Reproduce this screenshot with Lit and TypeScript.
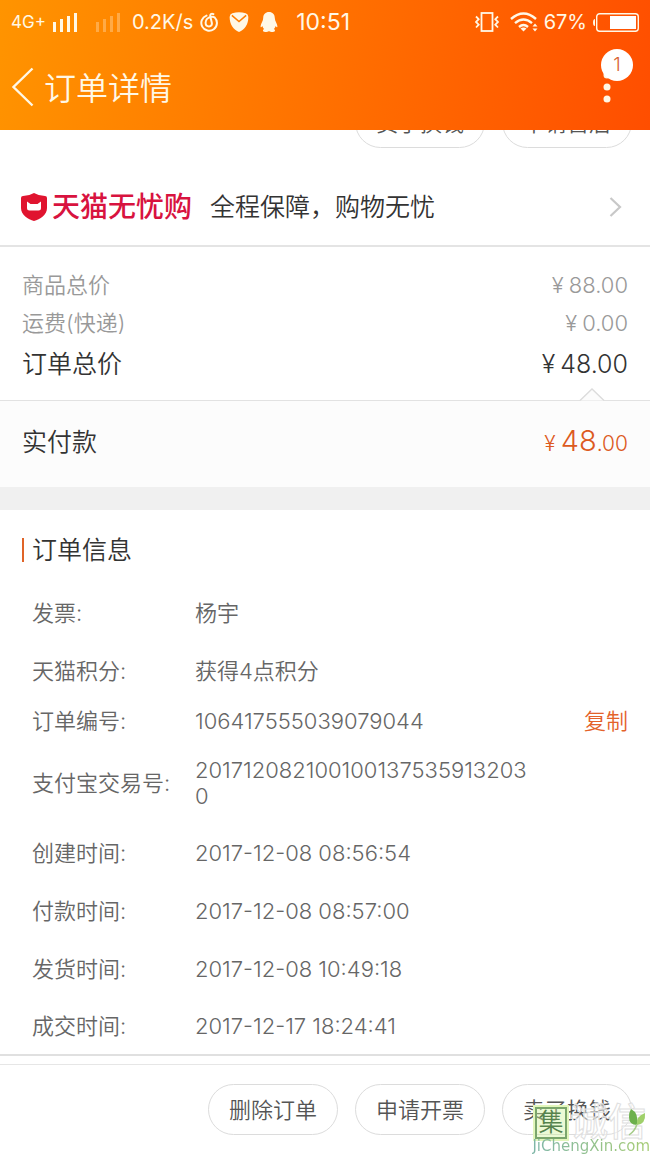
import { LitElement, html, css } from "lit";
import { customElement } from "lit/decorators.js";

interface InfoRow {
  label: string;
  value: string;
  size?: "compact" | "tall";
  copy?: boolean;
}

const INFO: InfoRow[] = [
  { label: "发票:", value: "杨宇" },
  { label: "天猫积分:", value: "获得4点积分" },
  { label: "订单编号:", value: "106417555039079044", size: "compact", copy: true },
  { label: "支付宝交易号:", value: "2017120821001001375359132030", size: "tall" },
  { label: "创建时间:", value: "2017-12-08 08:56:54" },
  { label: "付款时间:", value: "2017-12-08 08:57:00" },
  { label: "发货时间:", value: "2017-12-08 10:49:18" },
  { label: "成交时间:", value: "2017-12-17 18:24:41" },
];

const signal = html`<svg width="25" height="19" viewBox="0 0 25 19" fill="currentColor" aria-hidden="true">
  <rect x="0" y="9" width="3" height="10" /><rect x="7" y="6" width="3" height="13" />
  <rect x="14" y="3" width="3" height="16" /><rect x="21" y="0" width="3" height="19" />
</svg>`;

@customElement("status-bar")
export class StatusBar extends LitElement {
  static styles = css`
    :host {
      display: flex;
      align-items: center;
      height: 44px;
      padding: 0 11px;
      color: #fff8e6;
      font-size: 20px;
      font-weight: 400;
      line-height: 24px;
      white-space: nowrap;
    }
    svg { display: block; flex: none; }
    .net { font-size: 17px; margin-right: 7px; }
    .dim { opacity: 0.3; margin: 0 11px 0 18px; display: flex; }
    .icons { display: flex; gap: 11px; align-items: center; margin-left: 7px; }
    .time { font-size: 23px; margin-left: 18px; }
    .right { display: flex; align-items: center; margin-left: auto; }
    .gap { margin-left: 11px; }
    .pct { margin: 0 6px; }
  `;

  render() {
    return html`
      <span class="net">4G+</span>
      ${signal}
      <span class="dim">${signal}</span>
      <span>0.2K/s</span>
      <span class="icons">
        <svg width="18" height="20" viewBox="0 0 18 20" fill="none" stroke="currentColor" stroke-width="2" stroke-linecap="round" aria-hidden="true">
          <path d="M6.500 3.600A7.800 7.800 0 1 0 14.600 5.400C13.600 4.900 12.400 4.700 11 4.900C7.800 5.400 5.600 7.900 5.600 10.800C5.600 13 7.100 14.400 9 14.400C11.100 14.400 12.200 12.800 11.800 10.800L10.300 4.400C9.900 2.200 11.600 1 13.400 2.100" />
        </svg>
        <svg width="20" height="20" viewBox="0 0 20 21" aria-hidden="true">
          <path fill="currentColor" d="M3 1.200Q10-.8 17 1.200Q19.600 2 19.800 5C20 12.500 16 19 10 21C4 19 0 12.500 .200 5Q.400 2 3 1.200Z" />
          <path d="M2.500 3.500L10 10L17.500 3.500" fill="none" stroke="#ff7e00" stroke-width="1.600" />
        </svg>
        <svg width="18" height="20" viewBox="0 0 18 20" fill="currentColor" aria-hidden="true">
          <path d="M9 0C5.500 0 3.200 2.400 3.200 6C3.200 9.500 .800 11.400 .600 14.200C.600 16 1.700 15.300 2.400 14.100C2.700 15.500 3.400 16.400 4.200 17.100C2.600 17.700 2.300 20 5.100 20C7 20 8.300 19.500 9 18.900C9.700 19.500 11 20 12.900 20C15.700 20 15.400 17.700 13.800 17.100C14.600 16.400 15.300 15.500 15.600 14.100C16.300 15.300 17.400 16 17.400 14.200C17.200 11.400 14.800 9.500 14.800 6C14.800 2.400 12.500 0 9 0Z" />
        </svg>
      </span>
      <span class="time">10:51</span>
      <span class="right">
        <svg width="24" height="20" viewBox="0 0 24 20" fill="none" stroke="currentColor" stroke-width="1.800" aria-hidden="true">
          <rect x="6.500" y="1" width="11" height="18" />
          <path d="M1 4.500l2.700 2.700L1 10l2.700 2.700L1 15.500M23 4.500l-2.700 2.700L23 10l-2.700 2.700L23 15.500" />
        </svg>
        <svg class="gap" width="28" height="20" viewBox="0 0 28 20" fill="none" stroke="currentColor" stroke-width="2.400" aria-hidden="true">
          <path d="M1 7Q13.500-4 26 7M5 11.200Q13.500 4 22 11.200M9 15Q13.500 11.200 18 15" />
          <path d="M10.500 16.500Q13.500 14.500 16.500 16.500L13.500 19.600Z" fill="currentColor" stroke="none" />
          <path d="M22.500 14.500L25 11.500L27.500 14.500ZM22.500 16.500L25 19.500L27.500 16.500Z" fill="currentColor" stroke="none" />
        </svg>
        <span class="pct">67%</span>
        <svg width="46" height="19" viewBox="0 0 46 19" aria-hidden="true">
          <path d="M2 6Q0 6 0 9.500Q0 13 2 13Z" fill="currentColor" />
          <rect x="3.700" y=".700" width="41.600" height="17.600" rx="3" fill="none" stroke="currentColor" stroke-width="1.400" />
          <rect x="17" y="3" width="26" height="13" fill="#fff" />
        </svg>
      </span>
    `;
  }
}

@customElement("app-root")
export class AppRoot extends LitElement {
  static styles = css`
    :host {
      display: flex;
      flex-direction: column;
      min-height: 100vh;
      position: relative;
      background: #fff;
      color: #333;
      font-family: Inter, "Noto Sans CJK SC", sans-serif;
      font-weight: 350;
      font-size: 22px;
      line-height: 26px;
    }
    * { box-sizing: border-box; }
    svg { display: block; flex: none; }
    h1, h2, dl, dd, dt, p { margin: 0; font-weight: inherit; }
    button {
      font: inherit;
      color: inherit;
      background: none;
      border: 0;
      padding: 0;
      cursor: pointer;
    }
    .head { background: linear-gradient(100deg, #ff9400, #ff4e00); color: #fff8e6; }
    .nav { display: flex; align-items: center; height: 86px; padding: 0 17px 0 11px; }
    h1 { flex: 1; font-size: 32px; line-height: 44px; margin-left: 9px; padding-top: 4px; }
    .more { position: relative; width: 52px; height: 66px; }
    .more svg { margin: 0 auto 8px; }
    .badge {
      position: absolute;
      top: -5px;
      right: 0;
      width: 32px;
      height: 32px;
      border-radius: 50%;
      background: #fff;
      color: #d8602c;
      font-size: 19px;
      line-height: 32px;
    }
    .pill {
      width: 130px;
      height: 51px;
      border: 1px solid #dcdcdc;
      border-radius: 26px;
      color: #555;
      font-size: 22px;
      line-height: 26px;
    }
    .pills { display: flex; justify-content: flex-end; gap: 17px; padding: 0 18px 0 17px; }
    .cut { height: 18px; overflow: hidden; align-items: flex-end; }
    .cut .pill { flex: none; }
    .promise {
      display: flex;
      align-items: center;
      height: 99px;
      padding: 21px 28px 0 21px;
      border-bottom: 2px solid #e4e4e4;
      color: inherit;
      text-decoration: none;
      font-size: 25px;
      line-height: 36px;
    }
    .brand { color: #d8133f; font-size: 28px; font-weight: 500; margin: 0 18px 0 5px; }
    .promise .go { margin-left: auto; }
    .sums { position: relative; padding: 19px 22px 14px; border-bottom: 1px solid #e2e2e2; }
    .line { display: flex; justify-content: space-between; align-items: center; height: 38px; color: #999; }
    .total { height: 44px; color: #333; font-size: 25px; }
    .yen { margin-right: 5px; }
    .caret { position: absolute; right: 45px; bottom: -1px; }
    .paid {
      display: flex;
      justify-content: space-between;
      align-items: center;
      height: 86px;
      padding: 0 22px 4px;
      background: #fcfcfc;
      font-size: 25px;
    }
    .amount { color: #dc5a1e; font-size: 21px; }
    .whole { font-size: 29px; }
    .info { border-top: 23px solid #f0f0f0; border-bottom: 2px solid #e0e0e0; }
    h2 { display: flex; align-items: center; height: 74px; padding: 6px 22px 0; font-size: 25px; }
    h2::before { content: ""; width: 2px; height: 24px; margin-right: 8px; background: #e06428; }
    .row { display: flex; align-items: center; height: 58px; padding: 0 22px 0 32px; color: #666; }
    .row.compact { height: 42px; }
    .row.tall { height: 82px; }
    .row:last-child { height: 56px; }
    dt { width: 163px; flex: none; }
    .value { width: 340px; overflow-wrap: anywhere; }
    .copy { margin-left: auto; color: #e4622a; }
    .foot { margin-top: 8px; border-top: 1px solid #e6e6e6; padding-top: 19px; padding-bottom: 20px; }
    .mark { position: absolute; right: 0; bottom: 0; width: 120px; height: 54px; pointer-events: none; }
    .seal {
      position: absolute;
      left: 5px;
      top: 6px;
      width: 32px;
      height: 32px;
      border: 2px solid #7ba66c;
      outline: 2px solid #e2f6bb;
      background: rgba(205, 242, 150, 0.4);
      color: #56834d;
      font-size: 25px;
      line-height: 27px;
      text-align: center;
    }
    .ghost {
      position: absolute;
      left: 40px;
      top: 2px;
      font-size: 38px;
      line-height: 36px;
      font-weight: 500;
      color: rgba(255, 255, 255, 0.5);
      -webkit-text-stroke: 1px #e0e0e0;
    }
    .site {
      position: absolute;
      right: 0;
      bottom: 0;
      font-family: "DejaVu Sans", sans-serif;
      font-weight: 400;
      font-size: 15px;
      line-height: 18px;
      background: linear-gradient(90deg, #7fb6a8, #a6cc74);
      background-clip: text;
      color: transparent;
    }
    .leaf { position: absolute; right: 4px; top: 7px; }
  `;

  private price(label: string, whole: string, total = false) {
    return html`<div class="line ${total ? "total" : ""}">
      <span>${label}</span><span><span class="yen">¥</span>${whole}</span>
    </div>`;
  }

  render() {
    return html`
      <header class="head">
        <status-bar></status-bar>
        <div class="nav">
          <button aria-label="返回">
            <svg width="24" height="40" viewBox="0 0 24 40" fill="none" stroke="currentColor" stroke-width="2.400"><path d="M21.500 1.500L2.500 20L21.500 38.500" /></svg>
          </button>
          <h1>订单详情</h1>
          <button class="more" aria-label="更多">
            <svg width="8" height="42" viewBox="0 0 8 42" fill="currentColor"><circle cx="4" cy="13" r="3.500" /><circle cx="4" cy="25" r="3.500" /><circle cx="4" cy="37" r="3.500" /></svg>
            <span class="badge">1</span>
          </button>
        </div>
      </header>

      <div class="pills cut">
        <button class="pill">卖了换钱</button>
        <button class="pill">申请售后</button>
      </div>

      <a class="promise" href="#">
        <svg width="26" height="28" viewBox="0 0 26 28">
          <path fill="#e0142f" d="M13 0Q18 3 24 3Q26 3 26 5V15C26 22 19 26.500 13 28C7 26.500 0 22 0 15V5Q0 3 2 3Q8 3 13 0Z" />
          <path fill="#fff" d="M6 8.500L9.500 11H16.500L20 8.500V15Q20 17.500 17.500 17.500H8.500Q6 17.500 6 15Z" />
        </svg>
        <span class="brand">天猫无忧购</span>
        <span>全程保障，购物无忧</span>
        <svg class="go" width="13" height="20" viewBox="0 0 13 20" fill="none" stroke="#c8c8c8" stroke-width="2.200"><path d="M1.500 1L11 10L1.500 19" /></svg>
      </a>

      <section class="sums">
        ${this.price("商品总价", "88.00")}
        ${this.price("运费(快递)", "0.00")}
        ${this.price("订单总价", "48.00", true)}
        <svg class="caret" width="26" height="13" viewBox="0 0 26 13"><path d="M1 12.500L13 1L25 12.500" fill="#fcfcfc" stroke="#dcdcdc" stroke-width="1.400" /></svg>
      </section>
      <div class="paid">
        <span>实付款</span>
        <span class="amount"><span class="yen">¥</span><span class="whole">48</span>.00</span>
      </div>

      <section class="info">
        <h2>订单信息</h2>
        <dl>
          ${INFO.map(
            (r) => html`<div class="row ${r.size ?? ""}">
              <dt>${r.label}</dt>
              <dd class="value">${r.value}</dd>
              ${r.copy ? html`<dd class="copy"><button>复制</button></dd>` : ""}
            </div>`
          )}
        </dl>
      </section>

      <footer class="pills foot">
        <button class="pill">删除订单</button>
        <button class="pill">申请开票</button>
        <button class="pill">卖了换钱</button>
      </footer>

      <div class="mark">
        <span class="seal">集</span>
        <span class="ghost">诚信</span>
        <svg class="leaf" width="18" height="28" viewBox="0 0 18 28">
          <path fill="#6cb04c" d="M3 1Q11 5 9 17Q1 17 1 9Q1 4 3 1Z" />
          <path fill="#9fd06a" d="M17 5Q18 16 9 17Q8 8 17 5Z" />
          <path d="M9 16Q7 23 1 27" fill="none" stroke="#a6cc8a" stroke-width="1.500" />
        </svg>
        <span class="site">JiChengXin.com</span>
      </div>
    `;
  }
}
